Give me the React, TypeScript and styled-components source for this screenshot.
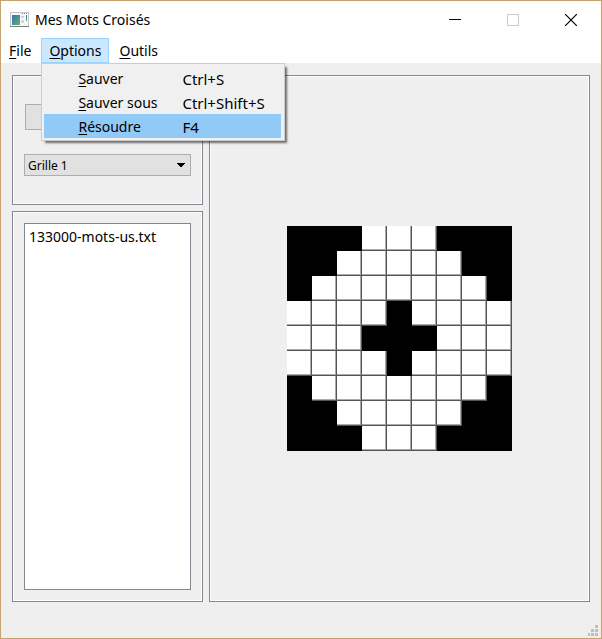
import React from "react";
import styled, { createGlobalStyle, css } from "styled-components";

const GlobalStyle = createGlobalStyle`
  *, *::before, *::after { box-sizing: border-box; }
  body {
    margin: 0;
    font-family: "Noto Sans", "Segoe UI", sans-serif;
    font-size: 14px;
    line-height: 24px;
    color: #000;
  }
  button, select { font: inherit; color: inherit; margin: 0; border-radius: 0; }
`;

const Window = styled.div`
  display: flex;
  flex-direction: column;
  min-height: 100vh;
  border: 1px solid #c6a26e;
  background: #efefef;
`;

const TitleBar = styled.header`
  display: flex;
  align-items: center;
  height: 37px;
  padding: 0 1px 0 9px;
  background: #fff;
`;

const Title = styled.h1`
  flex: 1;
  margin: 0 0 0 6px;
  font-size: 14px;
  font-weight: 400;
`;

const CaptionButton = styled.button`
  display: flex;
  align-items: center;
  justify-content: center;
  width: 58px;
  height: 36px;
  padding: 0;
  border: 0;
  background: transparent;
`;

const MenuBar = styled.nav`
  display: flex;
  gap: 2px;
  height: 25px;
  background: #fff;
`;

const MenuSlot = styled.div`
  position: relative;
  display: flex;
`;

const MenuButton = styled.button<{ $open?: boolean }>`
  padding: 0 7px;
  border: 1px solid ${(p) => (p.$open ? "#99d1ff" : "transparent")};
  background: ${(p) => (p.$open ? "#cce8ff" : "transparent")};
  line-height: 23px;
`;

const Mnemonic = styled.span`
  text-decoration: underline;
  text-decoration-thickness: 1px;
  text-underline-offset: 2px;
  text-decoration-skip-ink: none;
`;

const Menu = styled.div`
  position: absolute;
  top: 100%;
  left: 0;
  z-index: 1;
  width: 244px;
  padding: 2px 3px 2px 2px;
  border: 1px solid #ccc;
  background: #f0f0f0;
  box-shadow: 3px 3px 2px -1px rgba(0, 0, 0, 0.55);
`;

const MenuItem = styled.button<{ $active?: boolean }>`
  display: grid;
  grid-template-columns: 104px 1fr;
  width: 100%;
  height: 24px;
  padding: 1px 0 0 34px;
  border: 0;
  background: ${(p) => (p.$active ? "#91c9f7" : "transparent")};
  line-height: 24px;
  text-align: left;
`;

const Shortcut = styled.span`
  font-size: 15px;
`;

const Main = styled.main`
  flex: 1;
  display: flex;
  gap: 6px;
  padding: 12px 11px 0;
`;

const Sidebar = styled.div`
  display: flex;
  flex-direction: column;
  gap: 6px;
  width: 191px;
`;

const panel = css`
  display: flex;
  border: 1px solid #828790;
  box-shadow: inset 0 0 0 1px #fff;
`;

const ControlPanel = styled.section`
  ${panel}
  flex-direction: column;
  justify-content: center;
  gap: 24px;
  height: 130px;
  padding: 0 11px;
`;

const ListPanel = styled.section`
  ${panel}
  flex: 1;
  padding: 11px;
`;

const GridPanel = styled.section`
  ${panel}
  flex: 1;
  align-items: center;
  justify-content: center;
`;

const ActionButton = styled.button`
  height: 26px;
  margin: 0 1px;
  border: 1px solid #adadad;
  background: #e1e1e1;
`;

const ComboBox = styled.div`
  display: grid;
  align-items: center;
  height: 22px;

  > * { grid-area: 1 / 1; }
  > svg { justify-self: end; margin-right: 6px; pointer-events: none; }
`;

const Select = styled.select`
  appearance: none;
  width: 100%;
  height: 22px;
  padding: 1px 20px 0 3px;
  border: 1px solid #adadad;
  background: #e1e1e1;
  font-size: 12px;
  line-height: 20px;
`;

const FileList = styled.ul`
  flex: 1;
  margin: 0;
  padding: 1px 4px;
  border: 1px solid #828790;
  background: #fff;
  list-style: none;
`;

const Board = styled.div`
  display: grid;
  grid-template-columns: repeat(9, 25px);
  grid-auto-rows: 25px;
`;

const Cell = styled.button<{ $black: boolean }>`
  padding: 0;
  border: 0;
  background: ${(p) => (p.$black ? "#000" : "#fff")};
  box-shadow: ${(p) => (p.$black ? "none" : "inset -1px -1px #555, inset -2px -2px #aaa")};
`;

const StatusBar = styled.footer`
  display: flex;
  align-items: flex-end;
  justify-content: flex-end;
  height: 36px;
  padding: 0 3px 2px 0;
`;

const rows = [
  "###...###",
  "##.....##",
  "#.......#",
  "....#....",
  "...###...",
  "....#....",
  "#.......#",
  "##.....##",
  "###...###",
];

const menuItems = [
  { label: "Sauver", keys: "Ctrl+S" },
  { label: "Sauver sous", keys: "Ctrl+Shift+S" },
  { label: "Résoudre", keys: "F4", active: true },
];

const Label = ({ text }: { text: string }) => (
  <span>
    <Mnemonic>{text[0]}</Mnemonic>
    {text.slice(1)}
  </span>
);

const AppIcon = () => (
  <svg width="19" height="16" viewBox="0 0 19 16" shapeRendering="crispEdges" aria-hidden="true">
    <defs>
      <linearGradient id="screen" x1="0" y1="0" x2="1" y2="1">
        <stop offset="0" stopColor="#3f73a8" />
        <stop offset="0.5" stopColor="#4a9290" />
        <stop offset="1" stopColor="#62b070" />
      </linearGradient>
    </defs>
    <rect x="0" y="0" width="19" height="15" fill="#c3c7ca" />
    <rect x="1" y="1" width="17" height="13" fill="#f5f6f7" />
    <path d="M0 14.5h19" stroke="#777b7e" />
    <rect x="2" y="3" width="8" height="10" fill="url(#screen)" />
    <path d="M11 4h3v2h-3zM11 8h3v3h-3z" fill="#d2d5d8" />
    <rect x="16" y="3" width="1" height="6" fill="url(#screen)" />
    <path d="M12 1h1v1h-1zM14 1h1v1h-1zM16 1h1v1h-1z" fill="#6f8fa8" />
  </svg>
);

const Grip = () => (
  <svg width="10" height="11" viewBox="0 0 10 11" fill="#bfbfbf" shapeRendering="crispEdges" aria-hidden="true">
    <path d="M7 0h3v3h-3zM3 4h3v3h-3zM7 4h3v3h-3zM0 8h2v3h-2zM3 8h3v3h-3zM7 8h3v3h-3z" />
  </svg>
);

export default function App() {
  return (
    <>
      <GlobalStyle />
      <Window>
        <TitleBar>
          <AppIcon />
          <Title>Mes Mots Croisés</Title>
          <CaptionButton aria-label="Réduire">
            <svg width="12" height="12" shapeRendering="crispEdges">
              <path d="M0 5.5h12" stroke="#000" />
            </svg>
          </CaptionButton>
          <CaptionButton aria-label="Agrandir" disabled>
            <svg width="12" height="12" shapeRendering="crispEdges">
              <rect x="0.5" y="0.5" width="11" height="11" fill="none" stroke="#ccc" />
            </svg>
          </CaptionButton>
          <CaptionButton aria-label="Fermer">
            <svg width="12" height="12">
              <path d="M0 0L12 12M12 0L0 12" stroke="#000" strokeWidth="1.2" />
            </svg>
          </CaptionButton>
        </TitleBar>
        <MenuBar aria-label="Menu principal">
          <MenuButton>
            <Label text="File" />
          </MenuButton>
          <MenuSlot>
            <MenuButton $open aria-haspopup="menu" aria-expanded="true">
              <Label text="Options" />
            </MenuButton>
            <Menu role="menu">
              {menuItems.map((item) => (
                <MenuItem key={item.label} role="menuitem" $active={item.active}>
                  <Label text={item.label} />
                  <Shortcut>{item.keys}</Shortcut>
                </MenuItem>
              ))}
            </Menu>
          </MenuSlot>
          <MenuButton>
            <Label text="Outils" />
          </MenuButton>
        </MenuBar>
        <Main>
          <Sidebar>
            <ControlPanel>
              <ActionButton aria-label="Action" />
              <ComboBox>
                <Select aria-label="Grille" defaultValue="1">
                  <option value="1">Grille 1</option>
                </Select>
                <svg width="8" height="4" shapeRendering="crispEdges" aria-hidden="true">
                  <path d="M0 0h8v1h-1v1h-1v1h-1v1h-2v-1h-1v-1h-1v-1h-1z" />
                </svg>
              </ComboBox>
            </ControlPanel>
            <ListPanel>
              <FileList aria-label="Dictionnaires">
                <li>133000-mots-us.txt</li>
              </FileList>
            </ListPanel>
          </Sidebar>
          <GridPanel>
            <Board aria-label="Grille de mots croisés">
              {rows.flatMap((row, y) =>
                [...row].map((c, x) => (
                  <Cell
                    key={`${x}-${y}`}
                    $black={c === "#"}
                    disabled={c === "#"}
                    aria-label={`Ligne ${y + 1}, colonne ${x + 1}`}
                  />
                )),
              )}
            </Board>
          </GridPanel>
        </Main>
        <StatusBar>
          <Grip />
        </StatusBar>
      </Window>
    </>
  );
}
